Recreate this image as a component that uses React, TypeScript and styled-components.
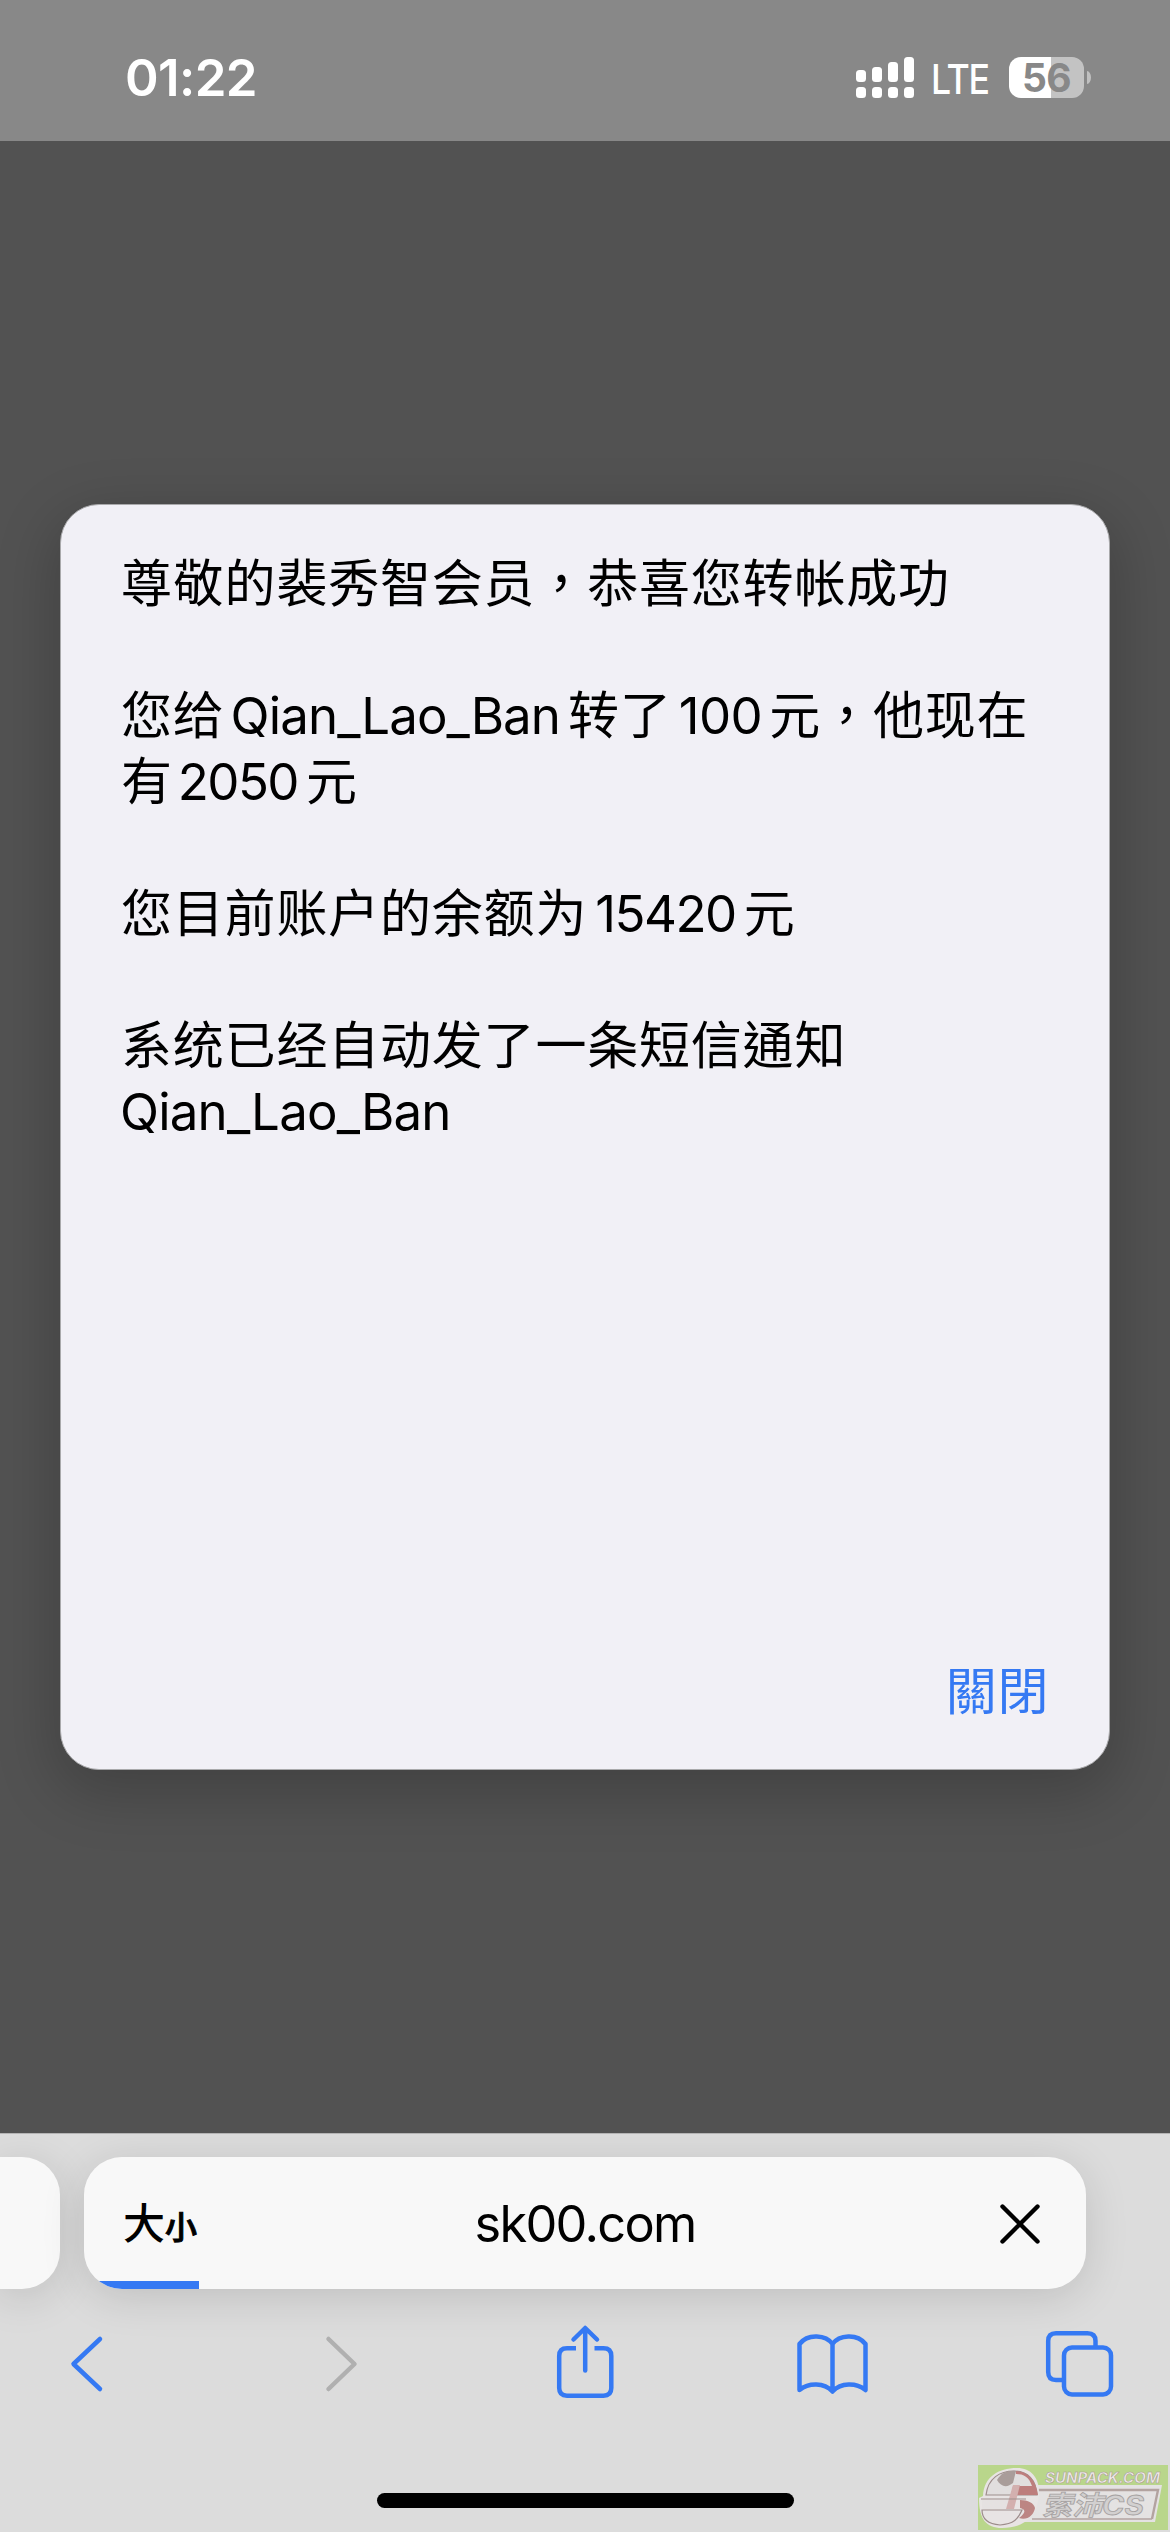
import React from 'react';
import styled, { createGlobalStyle } from 'styled-components';

const BLUE = '#3579f3';
const LATIN = 'Inter, "Noto Sans CJK TC", sans-serif';

const GlobalStyle = createGlobalStyle`
  * { box-sizing: border-box; }
  body { margin: 0; background: #525252; }
`;

const Screen = styled.div`
  width: 1170px;
  height: 2532px;
  display: flex;
  flex-direction: column;
  position: relative;
  overflow: hidden;
  background: #525252;
  font-family: ${LATIN};
`;

const StatusBar = styled.header`
  height: 141px;
  flex: none;
  display: flex;
  justify-content: space-between;
  align-items: flex-start;
  padding: 57px 79px 0 125px;
  background: #888888;
  color: #fff;
`;

const Clock = styled.time`
  font-size: 51px;
  line-height: 41px;
  font-weight: 600;
  letter-spacing: -0.6px;
`;

const StatusIcons = styled.div`
  display: flex;
  height: 41px;
`;

const Network = styled.span`
  width: 60px;
  margin: 0 18px 0 17px;
  font-size: 41px;
  line-height: 44px;
  font-weight: 500;
  letter-spacing: -1.5px;
  transform: scaleX(0.87);
  transform-origin: left;
`;

const Battery = styled.div`
  width: 75px;
  height: 41px;
  border-radius: 12px;
  background: linear-gradient(90deg, #fff 42px, #c3c3c3 42px);
  color: #888888;
  font-size: 39px;
  line-height: 41px;
  font-weight: 700;
  letter-spacing: -0.6px;
  text-align: center;
`;

const BatteryTip = styled.div`
  width: 4px;
  height: 13px;
  margin: 14px 0 0 3px;
  border-radius: 0 4px 4px 0 / 0 6.5px 6.5px 0;
  background: #c0c0c0;
`;

const Page = styled.main`
  flex: 1;
  padding: 363px 60px 0;
`;

const Dialog = styled.section`
  height: 1266px;
  display: flex;
  flex-direction: column;
  justify-content: space-between;
  padding: 42px 60px 48px 60px;
  border: 1px solid #a9a9ab;
  border-radius: 39px;
  background: #f1f0f6;
  box-shadow: 0 18px 60px 6px rgba(0, 0, 0, 0.2);
`;

const Message = styled.div`
  display: flex;
  flex-direction: column;
  gap: 66px;
`;

const Paragraph = styled.p`
  margin: 0;
  font-size: 51px;
  line-height: 66px;
  letter-spacing: 0.8px;
  color: #000;
  font-family: "Noto Sans CJK TC", sans-serif;
  white-space: nowrap;
`;

const Run = styled.span<{ $spacing: number; $left: number; $right: number }>`
  font-family: Inter, sans-serif;
  line-height: 1;
  letter-spacing: ${p => p.$spacing}px;
  margin-left: ${p => p.$left}px;
  margin-right: ${p => p.$right}px;
`;

const CloseButton = styled.button`
  align-self: flex-end;
  padding: 0;
  border: 0;
  background: none;
  color: ${BLUE};
  font: 400 51px/66px "Noto Sans CJK TC", sans-serif;
  letter-spacing: 0.6px;
`;

const BottomBar = styled.footer`
  height: 399px;
  flex: none;
  display: flex;
  flex-direction: column;
  border-top: 1px solid #b4b4b4;
  padding-top: 23px;
  background: #dcdcdc;
  overflow: hidden;
`;

const TabStrip = styled.div`
  height: 132px;
  flex: none;
  display: flex;
  gap: 24px;
`;

const PreviousTab = styled.div`
  width: 60px;
  border-radius: 0 38px 38px 0;
  background: #f8f8f8;
  box-shadow: 0 8px 44px rgba(0, 0, 0, 0.13);
`;

const TabShadow = styled.div`
  width: 1002px;
  border-radius: 38px;
  box-shadow: 0 8px 44px rgba(0, 0, 0, 0.13);
`;

const AddressBar = styled.div`
  height: 132px;
  display: grid;
  grid-template: 124px 8px / 1fr auto 1fr;
  align-items: center;
  border-radius: 38px;
  background: #f8f8f8;
  overflow: hidden;
`;

const SizeLabel = styled.span`
  display: flex;
  align-items: baseline;
  padding: 8px 0 0 39px;
  font-family: "Noto Sans CJK TC", sans-serif;
  font-weight: 500;
  line-height: 60px;
`;

const Glyph = styled.span<{ $size: number; $stroke?: number }>`
  font-size: ${p => p.$size}px;
  -webkit-text-stroke: ${p => p.$stroke ?? 0}px #000;
`;

const Address = styled.span`
  font-size: 50.5px;
  line-height: 60px;
  letter-spacing: -1.7px;
  padding-top: 10px;
`;

const StopIcon = styled.svg`
  width: 40px;
  height: 40px;
  justify-self: end;
  margin: 10px 46px 0 0;
`;

const Progress = styled.div`
  grid-column: 1 / -1;
  width: 115px;
  height: 8px;
  background: ${BLUE};
`;

const Toolbar = styled.nav`
  height: 204px;
  flex: none;
  display: flex;
  justify-content: space-between;
  padding: 33px 52px 0 66px;
`;

const ToolIcon = styled.svg<{ $muted?: boolean }>`
  width: 80px;
  height: 84px;
  margin: 0 -2px;
  fill: none;
  stroke: ${p => (p.$muted ? '#b0b0b0' : BLUE)};
  stroke-width: 4.5px;
  stroke-linecap: round;
  stroke-linejoin: round;
`;

const HomeIndicator = styled.div`
  width: 417px;
  height: 15px;
  flex: none;
  margin-left: 377px;
  border-radius: 8px;
  background: #000;
`;

const Watermark = styled.svg`
  position: absolute;
  left: 978px;
  top: 2465px;
`;

function SignalBars() {
  const tops = [13, 10, 5, 0];
  return (
    <svg width="58" height="41" fill="#fff">
      {tops.map((top, i) => (
        <g key={top}>
          <rect x={i * 16} y={top} width="10" height={25 - top} rx="3.5" />
          <rect x={i * 16} y="30" width="10" height="11" rx="3.5" />
        </g>
      ))}
    </svg>
  );
}

function BrandMark() {
  return (
    <Watermark width="190" height="65" viewBox="0 0 190 65">
      <rect width="190" height="65" fill="#b9d68b" />
      <path d="M48 20H184L177 57H46Z" fill="#e4e2e2" />
      <path d="M58 25H180L174 54" fill="none" stroke="#b3a3a0" strokeWidth="2.4" />
      <path d="M54 54H174" fill="none" stroke="#b3a3a0" strokeWidth="1.6" />
      <path
        d="M5 31C6 12 20 3 39 3C54 3 62 14 61 30C59 51 47 63 24 63C8 63 1 54 1 33Z"
        fill="#e8e4e4"
      />
      <path d="M8 30C10 13 22 6 36 6C50 6 58 15 59 30Z" fill="#e1dede" stroke="#9d8d8b" strokeWidth="1.2" />
      <path d="M19 15C23 8 30 5 38 6L35 18C29 23 23 22 19 15Z" fill="#a99d9a" />
      <path d="M38 6C50 6 58 15 60 30H33L35 21H54C51 12 46 9 38 9Z" fill="#bd7e7d" />
      <path d="M4 35H36V44H4Z" fill="#e5e1e1" />
      <path d="M42 35C50 35 56 38 57 43C56 50 49 56 41 53C49 47 47 44 42 43Z" fill="#bc8583" />
      <path d="M35 20H42L36 44H28Z" fill="#d3b0af" />
      <path d="M3 34H48M4 45H44C40 54 36 59 22 60C10 59 4 54 4 45Z" fill="none" stroke="#9d8d8b" strokeWidth="1.2" />
      <g fontFamily='Inter, "Noto Sans CJK TC", sans-serif' fontStyle="italic" fontWeight="700">
        <text x="67" y="17.500" fontSize="14" fill="#eeeaea" stroke="#a99b93" strokeWidth="0.5" textLength="115" lengthAdjust="spacingAndGlyphs">
          SUNPACK.COM
        </text>
        <text x="64" y="50" fontSize="27" fill="#d2d0d0" stroke="#a5a1a1" strokeWidth="0.8" textLength="102" lengthAdjust="spacingAndGlyphs">
          索沛CS
        </text>
      </g>
    </Watermark>
  );
}

export default function App() {
  return (
    <Screen>
      <GlobalStyle />
      <StatusBar>
        <Clock>01:22</Clock>
        <StatusIcons>
          <SignalBars />
          <Network>LTE</Network>
          <Battery>56</Battery>
          <BatteryTip />
        </StatusIcons>
      </StatusBar>

      <Page>
        <Dialog>
          <Message>
            <Paragraph>尊敬的裴秀智会员，恭喜您转帐成功</Paragraph>
            <Paragraph>
              您给
              <Run $spacing={-0.9} $left={6} $right={8}>Qian_Lao_Ban</Run>
              转了
              <Run $spacing={-0.5} $left={7} $right={7}>100</Run>
              元，他现在
              <br />有
              <Run $spacing={-1.6} $left={5} $right={8}>2050</Run>
              元
            </Paragraph>
            <Paragraph>
              您目前账户的余额为
              <Run $spacing={-1.5} $left={8} $right={8}>15420</Run>
              元
            </Paragraph>
            <Paragraph>
              系统已经自动发了一条短信通知
              <br />
              <Run $spacing={-0.8} $left={-1} $right={0}>Qian_Lao_Ban</Run>
            </Paragraph>
          </Message>
          <CloseButton>關閉</CloseButton>
        </Dialog>
      </Page>

      <BottomBar>
        <TabStrip>
          <PreviousTab />
          <TabShadow>
            <AddressBar>
              <SizeLabel>
                <Glyph $size={42}>大</Glyph>
                <Glyph $size={32} $stroke={1}>小</Glyph>
              </SizeLabel>
              <Address>sk00.com</Address>
              <StopIcon viewBox="0 0 40 40" stroke="#000" strokeWidth="4.4" strokeLinecap="round">
                <path d="M2.5 2.5L37.5 37.5M37.5 2.5L2.5 37.5" />
              </StopIcon>
              <Progress />
            </AddressBar>
          </TabShadow>
        </TabStrip>
        <Toolbar>
          <ToolIcon viewBox="64 2322 80 84">
            <path d="M100 2339L73.500 2364L100 2389" />
          </ToolIcon>
          <ToolIcon $muted viewBox="308 2322 80 84">
            <path d="M328.500 2339L354.500 2364L328.500 2389" />
          </ToolIcon>
          <ToolIcon viewBox="552 2322 80 84">
            <path d="M576 2348.300H567Q559.200 2348.300 559.200 2356V2388Q559.200 2395.700 567 2395.700H603.500Q611.300 2395.700 611.300 2388V2356Q611.300 2348.300 603.500 2348.300H594.500" strokeLinecap="butt" />
            <path d="M585.200 2370.500V2329M573.500 2339.500L585.200 2328L597 2339.500" />
          </ToolIcon>
          <ToolIcon viewBox="796 2322 80 84">
            <path d="M832.500 2344C826 2335 808 2333 799.500 2344V2390C809 2382.500 824 2382.500 832.500 2391.500C841 2382.500 856 2382.500 865.500 2390V2344C857 2333 839 2335 832.500 2344V2391" />
          </ToolIcon>
          <ToolIcon viewBox="1040 2322 80 84">
            <path d="M1063 2380H1056Q1048.200 2380 1048.200 2372V2341Q1048.200 2333.200 1056 2333.200H1087.500Q1095.500 2333.200 1095.500 2341V2347" strokeLinecap="butt" />
            <rect x="1064" y="2347.400" width="47" height="47" rx="8" />
          </ToolIcon>
        </Toolbar>
        <HomeIndicator />
      </BottomBar>
      <BrandMark />
    </Screen>
  );
}
